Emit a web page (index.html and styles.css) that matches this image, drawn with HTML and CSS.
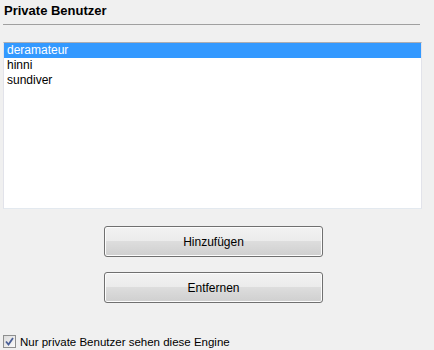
FILE: index.html
```html
<!DOCTYPE html>
<html lang="de">
<head>
    <meta charset="UTF-8">
    <title>Private Benutzer</title>
    <link rel="stylesheet" href="styles.css">
</head>
<body>
    <div class="panel">
        <div class="section-title">Private Benutzer</div>
        <ul class="user-list">
            <li class="selected">deramateur</li>
            <li>hinni</li>
            <li>sundiver</li>
        </ul>
        <div class="actions">
            <button class="btn">Hinzufügen</button>
            <button class="btn">Entfernen</button>
        </div>
        <label class="check-row">
            <span class="checkbox">
                <svg width="9" height="9" viewBox="0 0 9 9">
                    <path d="M1 4.5 L3.5 7.5 L8 1" fill="none" stroke="#4a5f97" stroke-width="1.8"/>
                </svg>
            </span>
            <span class="check-label">Nur private Benutzer sehen diese Engine</span>
        </label>
    </div>
</body>
</html>
```

FILE: styles.css
```css
body {
    margin: 0;
    background-color: #f0f0f0;
    font-family: "Liberation Sans", Arial, sans-serif;
    font-size: 12px;
    color: #000;
}
.panel {
    padding-left: 3px;
    width: 419px;
}
.section-title {
    font-weight: bold;
    font-size: 13px;
    line-height: 15px;
    padding: 3px 0 6px 1px;
    width: 416px;
    border-bottom: 1px solid #a0a0a0;
}
.user-list {
    list-style: none;
    margin: 17px 0 0 0;
    padding: 0;
    height: 165px;
    background-color: #fff;
    border: 1px solid #e2e3ea;
    border-top-color: #abadb3;
    border-bottom-color: #e3e9ef;
}
.user-list li {
    line-height: 15px;
    height: 15px;
    padding-left: 3px;
}
.user-list li.selected {
    background-color: #3399ff;
    color: #fff;
}
.actions {
    display: flex;
    flex-direction: column;
    align-items: center;
    gap: 15px;
    margin-top: 17px;
    padding-left: 2px;
}
.btn {
    width: 219px;
    height: 31px;
    font-family: "Liberation Sans", Arial, sans-serif;
    font-size: 12px;
    color: #000;
    border: 1px solid #707070;
    border-radius: 3px;
    box-shadow: inset 0 0 0 1px #fcfcfc;
    background: linear-gradient(to bottom, #f2f2f2 0%, #ebebeb 50%, #dddddd 50%, #cfcfcf 100%);
    padding: 0;
}
.check-row {
    display: flex;
    align-items: center;
    gap: 4px;
    margin-top: 30px;
    line-height: 15px;
}
.check-label {
    font-size: 11.5px;
    padding-top: 2px;
}
.checkbox {
    width: 11px;
    height: 11px;
    border: 1px solid #8e8f8f;
    background: linear-gradient(to bottom right, #dcdcdc, #fafafa);
    display: flex;
    align-items: center;
    justify-content: center;
}
```
